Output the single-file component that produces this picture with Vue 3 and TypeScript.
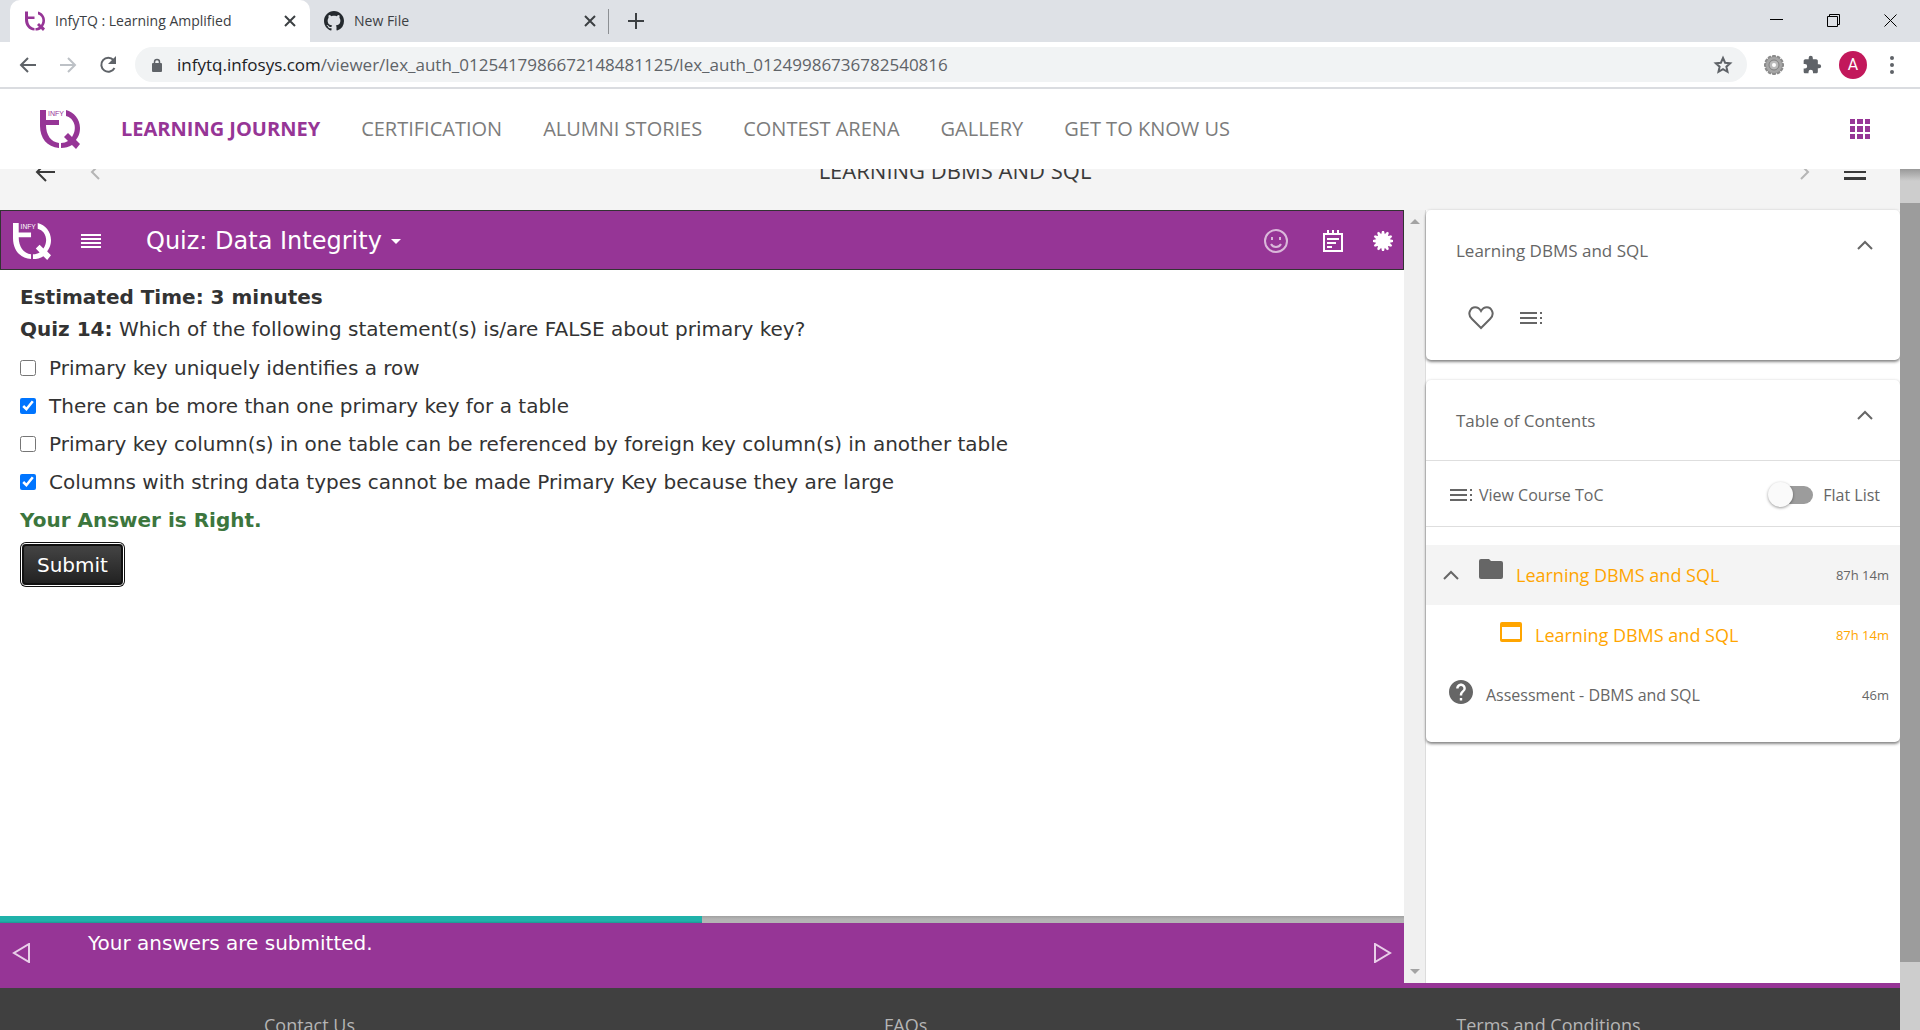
<script setup lang="ts">
import { ref } from 'vue'

interface Option {
  id: string
  text: string
  checked: boolean
}

const navItems: string[] = ['CERTIFICATION', 'ALUMNI STORIES', 'CONTEST ARENA', 'GALLERY', 'GET TO KNOW US']

const options = ref<Option[]>([
  { id: 'opt-1', text: 'Primary key uniquely identifies a row', checked: false },
  { id: 'opt-2', text: 'There can be more than one primary key for a table', checked: true },
  {
    id: 'opt-3',
    text: 'Primary key column(s) in one table can be referenced by foreign key column(s) in another table',
    checked: false,
  },
  { id: 'opt-4', text: 'Columns with string data types cannot be made Primary Key because they are large', checked: true },
])

const flatList = ref(false)
const progress = 50
const teeth = Array.from({ length: 12 }, (_, i) => i * 30)
</script>

<template>
  <div class="window">
    <svg class="defs" aria-hidden="true">
      <symbol id="infytq" viewBox="0 0 40 40">
        <path d="M0 1h6v10h13v5H6c0 10 5 17 13 18v5C7 38 0 29 0 17z" fill="currentColor" />
        <path d="M26 1c8 2 14 9 14 18 0 6-2 9-4 12l4 4-4 5-4-4c-3 2-7 3-11 3v-5c3 0 5-1 7-2l-4-4 4-4 4 4c6-9 2-19-6-21z" fill="currentColor" />
      </symbol>
      <symbol id="toc" viewBox="0 0 24 14">
        <path d="M0 2h17M0 7h17M0 12h17M20 2h2M20 7h2M20 12h2" stroke="currentColor" stroke-width="2" />
      </symbol>
      <symbol id="up" viewBox="0 0 16 10">
        <path d="M1 9l7-7 7 7" fill="none" stroke="currentColor" stroke-width="2" />
      </symbol>
    </svg>

    <header class="browser">
      <div class="tabs">
        <div class="tab active">
          <svg class="favicon purple"><use href="#infytq" /></svg>
          <span class="tab-title">InfyTQ : Learning Amplified</span>
          <button class="icon-btn" aria-label="Close tab">
            <svg width="12" height="12" viewBox="0 0 12 12"><path d="M1 1l10 10M11 1L1 11" stroke="#3c4043" stroke-width="2" /></svg>
          </button>
        </div>
        <div class="tab second">
          <svg class="favicon" viewBox="0 0 16 16"><path fill="#24292e" d="M8 0C3.58 0 0 3.58 0 8c0 3.54 2.29 6.53 5.47 7.59.4.07.55-.17.55-.38 0-.19-.01-.82-.01-1.49-2.01.37-2.53-.49-2.69-.94-.09-.23-.48-.94-.82-1.13-.28-.15-.68-.52-.01-.53.63-.01 1.08.58 1.23.82.72 1.21 1.87.87 2.33.66.07-.52.28-.87.51-1.07-1.78-.2-3.64-.89-3.64-3.95 0-.87.31-1.59.82-2.15-.08-.2-.36-1.02.08-2.12 0 0 .67-.21 2.2.82.64-.18 1.32-.27 2-.27s1.36.09 2 .27c1.53-1.04 2.2-.82 2.2-.82.44 1.1.16 1.92.08 2.12.51.56.82 1.27.82 2.15 0 3.07-1.87 3.75-3.65 3.95.29.25.54.73.54 1.48 0 1.07-.01 1.93-.01 2.2 0 .21.15.46.55.38A8.01 8.01 0 0016 8c0-4.42-3.58-8-8-8z" /></svg>
          <span class="tab-title">New File</span>
          <button class="icon-btn" aria-label="Close tab">
            <svg width="12" height="12" viewBox="0 0 12 12"><path d="M1 1l10 10M11 1L1 11" stroke="#3c4043" stroke-width="2" /></svg>
          </button>
        </div>
        <button class="icon-btn new-tab" aria-label="New tab">
          <svg width="16" height="16" viewBox="0 0 16 16"><path d="M8 0v16M0 8h16" stroke="#3c4043" stroke-width="2" /></svg>
        </button>
        <div class="controls">
          <button class="icon-btn" aria-label="Minimize"><svg width="14" height="14" viewBox="0 0 14 14"><path d="M0 5.500h13" stroke="#000" /></svg></button>
          <button class="icon-btn" aria-label="Restore"><svg width="14" height="14" viewBox="0 0 14 14" fill="none" stroke="#000"><path d="M.5 2.500h10v10H.5zM2.500 2.500v-2h10v10h-2" /></svg></button>
          <button class="icon-btn" aria-label="Close"><svg width="14" height="14" viewBox="0 0 14 14"><path d="M.5 .5l12 12M12.500 .5l-12 12" stroke="#000" /></svg></button>
        </div>
      </div>

      <div class="toolbar">
        <div class="nav-buttons">
          <button class="icon-btn" aria-label="Back"><svg width="20" height="20" viewBox="0 0 20 20" fill="none" stroke="#5f6368" stroke-width="2"><path d="M18 10H3M10 3l-7 7 7 7" /></svg></button>
          <button class="icon-btn" aria-label="Forward"><svg width="20" height="20" viewBox="0 0 20 20" fill="none" stroke="#bdc1c6" stroke-width="2"><path d="M2 10h15M10 3l7 7-7 7" /></svg></button>
          <button class="icon-btn" aria-label="Reload"><svg width="20" height="20" viewBox="0 0 20 20"><path d="M16.500 13A7 7 0 1 1 15.500 5" fill="none" stroke="#5f6368" stroke-width="2" /><path d="M18 1v8h-8z" fill="#5f6368" /></svg></button>
        </div>
        <div class="omnibox">
          <svg width="12" height="14" viewBox="0 0 12 14"><rect x="1" y="5" width="10" height="9" rx="1" fill="#5f6368" /><path d="M3.500 6V4a2.500 2.500 0 0 1 5 0v2" fill="none" stroke="#5f6368" stroke-width="1.500" /></svg>
          <span class="url"><b>infytq.infosys.com</b>/viewer/lex_auth_0125417986672148481125/lex_auth_01249986736782540816</span>
          <button class="icon-btn" aria-label="Bookmark"><svg width="20" height="20" viewBox="0 0 20 20"><path d="M10 3l2.100 4.700 5.100.5-3.800 3.500 1.100 5.100-4.500-2.700-4.500 2.700 1.100-5.100-3.800-3.500 5.100-.5z" fill="none" stroke="#5f6368" stroke-width="2" /></svg></button>
        </div>
        <div class="extensions">
          <svg width="20" height="20" viewBox="0 0 20 20">
            <rect v-for="a in teeth" :key="a" x="8" y="0" width="4" height="5" rx="1" fill="#8c8c8c" :transform="`rotate(${a} 10 10)`" />
            <circle cx="10" cy="10" r="8" fill="#a6a6a6" /><circle cx="10" cy="10" r="5" fill="#bbb" stroke="#808080" /><circle cx="10" cy="10" r="2" fill="#fff" />
          </svg>
          <svg width="20" height="20" viewBox="0 0 24 24"><path fill="#5f6368" d="M20.500 11H19V7c0-1.100-.9-2-2-2h-4V3.500a2.500 2.500 0 0 0-5 0V5H4c-1.100 0-2 .9-2 2v3.800h1.500a2.700 2.700 0 0 1 0 5.400H2V20c0 1.100.9 2 2 2h3.800v-1.500a2.700 2.700 0 0 1 5.400 0V22H17c1.100 0 2-.9 2-2v-4h1.500a2.500 2.500 0 0 0 0-5z" /></svg>
          <button class="avatar">A</button>
          <svg width="4" height="18" viewBox="0 0 4 18" fill="#5f6368"><circle cx="2" cy="2" r="2" /><circle cx="2" cy="9" r="2" /><circle cx="2" cy="16" r="2" /></svg>
        </div>
      </div>
    </header>

    <header class="site-header">
      <svg class="logo purple" viewBox="0 0 40 40"><use href="#infytq" /><text x="8" y="7">INFY</text></svg>
      <nav>
        <a href="#" class="current">LEARNING JOURNEY</a>
        <a v-for="item in navItems" :key="item" href="#">{{ item }}</a>
      </nav>
      <button class="icon-btn apps" aria-label="Apps">
        <svg width="20" height="20" viewBox="0 0 20 20"><path fill="#963596" d="M0 0h5v5H0zM7 0h6v5H7zM15 0h5v5h-5zM0 7h5v6H0zM7 7h6v6H7zM15 7h5v6h-5zM0 15h5v5H0zM7 15h6v5H7zM15 15h5v5h-5z" /></svg>
      </button>
    </header>

    <div class="viewport">
      <div class="page">
        <div class="course-bar">
          <div class="course-inner">
            <button class="icon-btn" aria-label="Go back"><svg width="20" height="20" viewBox="0 0 20 20" fill="none" stroke="#3a3a3a" stroke-width="2"><path d="M20 10H2M11 1l-9 9 9 9" /></svg></button>
            <button class="icon-btn prev" aria-label="Previous"><svg width="10" height="16" viewBox="0 0 10 16" fill="none" stroke="#b5b5b5" stroke-width="2"><path d="M9 1L2 8l7 7" /></svg></button>
            <h1>LEARNING DBMS AND SQL</h1>
            <button class="icon-btn next" aria-label="Next"><svg width="10" height="16" viewBox="0 0 10 16" fill="none" stroke="#b5b5b5" stroke-width="2"><path d="M1 1l7 7-7 7" /></svg></button>
            <button class="icon-btn" aria-label="Menu"><svg width="22" height="16" viewBox="0 0 22 16"><path d="M0 1h22M0 8h22" stroke="#3a3a3a" stroke-width="2" /><path d="M0 14.500h22" stroke="#3a3a3a" stroke-width="3" /></svg></button>
          </div>
        </div>

        <main class="content">
          <section class="player">
            <div class="player-bar">
              <svg class="player-logo" viewBox="0 0 40 40"><use href="#infytq" /><text x="8" y="7">INFY</text></svg>
              <button class="icon-btn player-menu" aria-label="Contents"><svg width="20" height="16" viewBox="0 0 20 16"><path d="M0 2h20M0 6h20M0 10h20M0 14h20" stroke="#fff" stroke-width="2" /></svg></button>
              <button class="player-title">Quiz: Data Integrity<span class="caret"></span></button>
              <div class="player-tools">
                <svg class="smile" width="24" height="24" viewBox="0 0 24 24" fill="none" stroke="#fff" stroke-width="2"><circle cx="12" cy="12" r="11" /><path d="M7 15c2 4 8 4 10 0" /><path d="M8 8v3M16 8v3" /></svg>
                <svg class="note" width="20" height="22" viewBox="0 0 20 22" fill="none" stroke="#fff" stroke-width="2"><path d="M1 4h18v17H1zM5 0v5M10 0v5M15 0v5" /><path d="M4 9h12M4 13h9M4 17h5" /></svg>
                <svg width="20" height="20" viewBox="0 0 20 20"><circle cx="10" cy="10" r="7" fill="#fff" /><path v-for="a in teeth" :key="a" d="M8 4l1-4h2l1 4z" fill="#fff" :transform="`rotate(${a} 10 10)`" /></svg>
              </div>
            </div>

            <form class="quiz" @submit.prevent>
              <p><strong>Estimated Time: 3 minutes</strong></p>
              <p><strong>Quiz 14:</strong> Which of the following statement(s) is/are FALSE about primary key?</p>
              <div class="options">
                <div v-for="o in options" :key="o.id" class="option">
                  <input :id="o.id" v-model="o.checked" type="checkbox" />
                  <label :for="o.id">{{ o.text }}</label>
                </div>
              </div>
              <p class="result"><strong>Your Answer is Right.</strong></p>
              <button class="submit">Submit</button>
            </form>

            <div class="progress"><div class="done" :style="{ width: progress + '%' }"></div></div>
            <div class="player-foot">
              <button class="icon-btn" aria-label="Previous page"><svg width="18" height="20" viewBox="0 0 18 20" fill="none" stroke="#e9cfe9" stroke-width="2"><path d="M17 1v18L2 10z" /></svg></button>
              <p>Your answers are submitted.</p>
              <button class="icon-btn" aria-label="Next page"><svg width="18" height="20" viewBox="0 0 18 20" fill="none" stroke="#e9cfe9" stroke-width="2"><path d="M1 1v18l15-9z" /></svg></button>
            </div>
          </section>

          <div class="side-area">
            <div class="inner-scroll"><span class="arrow up"></span><span class="arrow down"></span></div>
            <aside>
              <section class="card summary">
                <div class="card-head">
                  <h2>Learning DBMS and SQL</h2>
                  <svg class="collapse"><use href="#up" /></svg>
                </div>
                <div class="card-actions">
                  <button class="icon-btn" aria-label="Favourite"><svg width="26" height="24" viewBox="0 0 26 24" fill="none" stroke="#666" stroke-width="2"><path d="M13 22L4 13C1 10 1 7 2 5c2-5 8-5 11 0 3-5 9-5 11 0 1 2 1 5-2 8z" /></svg></button>
                  <button class="icon-btn" aria-label="Contents list"><svg class="toc-icon"><use href="#toc" /></svg></button>
                </div>
              </section>

              <section class="card">
                <div class="card-head toc-head">
                  <h2>Table of Contents</h2>
                  <svg class="collapse"><use href="#up" /></svg>
                </div>
                <div class="toc-tools">
                  <svg class="toc-icon"><use href="#toc" /></svg>
                  <a href="#">View Course ToC</a>
                  <input id="flat" v-model="flatList" class="switch" type="checkbox" />
                  <label for="flat">Flat List</label>
                </div>
                <div class="tree">
                  <div class="row folder">
                    <svg class="fold"><use href="#up" /></svg>
                    <svg class="glyph" width="24" height="20" viewBox="0 0 24 20"><path d="M2 0h8l2 2h10q2 0 2 2v14q0 2-2 2H2q-2 0-2-2V2q0-2 2-2z" fill="#666" /></svg>
                    <a href="#" class="orange">Learning DBMS and SQL</a><span class="time">87h 14m</span>
                  </div>
                  <div class="row child">
                    <svg class="glyph" width="22" height="20" viewBox="0 0 22 20"><path d="M2 0h18q2 0 2 2v16q0 2-2 2H2q-2 0-2-2V2q0-2 2-2zM2 5v12h18V5z" fill="orange" fill-rule="evenodd" /></svg>
                    <a href="#" class="orange">Learning DBMS and SQL</a><span class="time orange">87h 14m</span>
                  </div>
                  <div class="row exam">
                    <svg class="glyph" width="24" height="24" viewBox="2 2 20 20"><path fill="#666" d="M12 2C6.480 2 2 6.480 2 12s4.480 10 10 10 10-4.480 10-10S17.520 2 12 2zm1 17h-2v-2h2v2zm2.070-7.750l-.9.920C13.450 12.900 13 13.500 13 15h-2v-.5c0-1.100.45-2.100 1.170-2.830l1.240-1.260c.37-.36.59-.86.59-1.410 0-1.100-.9-2-2-2s-2 .9-2 2H8c0-2.210 1.790-4 4-4s4 1.790 4 4c0 .88-.36 1.680-.93 2.250z" /></svg>
                    <a href="#">Assessment - DBMS and SQL</a><span class="time">46m</span>
                  </div>
                </div>
              </section>
            </aside>
          </div>
        </main>

        <footer>
          <a href="#">Contact Us</a>
          <a href="#">FAQs</a>
          <a href="#">Terms and Conditions</a>
        </footer>
      </div>
      <div class="page-scroll"><div class="thumb"></div></div>
    </div>
  </div>
</template>

<style>
body {
  overflow: hidden;
}
</style>

<style scoped>
* {
  box-sizing: border-box;
}
.window {
  display: flex;
  flex-direction: column;
  height: 100vh;
  overflow: hidden;
  background: #fff;
  color: #666;
  font: 17px/24px 'Open Sans', 'Noto Sans', sans-serif;
}
.defs {
  position: absolute;
  width: 0;
  height: 0;
}
svg {
  display: block;
  flex: none;
}
svg text {
  fill: currentColor;
  font: 7px 'Liberation Sans', sans-serif;
}
a {
  color: inherit;
  text-decoration: none;
}
h1,
h2,
p {
  margin: 0;
  font-weight: 400;
}
.icon-btn {
  display: flex;
  flex: none;
  padding: 0;
  border: 0;
  background: none;
  color: inherit;
}
.purple {
  color: #963596;
}

.tabs {
  display: flex;
  align-items: center;
  height: 42px;
  padding: 0 22px 0 10px;
  background: #dee1e6;
}
.tab {
  display: flex;
  align-items: center;
  height: 42px;
  gap: 10px;
  color: #3c4043;
  font-size: 14px;
}
.tab.active {
  width: 300px;
  padding: 0 14px 0 15px;
  border-radius: 10px 10px 0 0;
  background: #fff;
}
.tab.second {
  width: 299px;
  height: 25px;
  padding: 0 12px 0 14px;
  border-right: 1px solid #8c8f93;
}
.tab-title {
  flex: 1;
  white-space: nowrap;
}
.favicon {
  width: 20px;
  height: 20px;
}
.new-tab {
  margin-left: 19px;
}
.controls {
  display: flex;
  gap: 43px;
  margin-left: auto;
}
.toolbar {
  display: flex;
  align-items: center;
  height: 47px;
  padding: 0 26px 0 18px;
  border-bottom: 2px solid #dadce0;
}
.nav-buttons {
  display: flex;
  gap: 20px;
  margin-right: 17px;
}
.omnibox {
  display: flex;
  flex: 1;
  align-items: center;
  height: 35px;
  padding: 0 14px 0 16px;
  border-radius: 18px;
  background: #f1f3f4;
}
.url {
  flex: 1;
  margin-left: 14px;
  color: #5f6368;
  font-size: 17px;
  white-space: nowrap;
}
.url b {
  color: #202124;
  font-weight: 400;
}
.extensions {
  display: flex;
  align-items: center;
  gap: 18px;
  margin-left: 17px;
}
.avatar {
  width: 28px;
  height: 28px;
  margin: 0 5px 0 -1px;
  padding: 0;
  border: 0;
  border-radius: 50%;
  background: #c2185b;
  color: #fff;
  font: 16px/28px Roboto, sans-serif;
}

.site-header {
  display: flex;
  flex: none;
  align-items: center;
  height: 80px;
  padding: 0 50px 0 40px;
  background: #fff;
}
.logo {
  width: 40px;
  height: 40px;
}
nav {
  display: flex;
  gap: 41px;
  margin-left: 41px;
  color: #7c7c7c;
  font-size: 20px;
  white-space: nowrap;
}
nav .current {
  color: #963596;
  font-weight: 700;
}
.apps {
  margin-left: auto;
}

.viewport {
  display: flex;
  flex: 1;
  min-height: 0;
}
.page {
  display: flex;
  flex: 1;
  flex-direction: column;
  min-width: 0;
}
.page-scroll {
  width: 20px;
  padding-top: 34px;
  background: linear-gradient(#999, #cdcdcd 12px);
}
.thumb {
  height: 92%;
  max-height: 759px;
  background: #9c9c9c;
}
.course-bar {
  flex: none;
  height: 41px;
  overflow: hidden;
  background: #f4f4f4;
}
.course-inner {
  display: flex;
  align-items: center;
  height: 76px;
  margin-top: -35px;
  padding: 0 34px 0 35px;
}
.prev {
  margin-left: 35px;
}
.next {
  margin-right: 34px;
}
h1 {
  flex: 1;
  padding: 0 0 4px 10px;
  color: #3a3a3a;
  font-size: 22px;
  text-align: center;
}

.content {
  display: flex;
  flex: 1;
  background: #963596;
}
.player {
  display: flex;
  flex: 1404;
  flex-direction: column;
  min-width: 0;
  background: #fff;
  font-family: 'DejaVu Sans', Verdana, sans-serif;
}
.player-bar {
  display: flex;
  align-items: center;
  height: 60px;
  padding: 2px 10px 0 12px;
  border: 1px solid #333;
  background: #963596;
  color: #fff;
}
.player-logo {
  width: 38px;
  height: 38px;
}
.player-menu {
  margin-left: 30px;
}
.player-title {
  display: flex;
  align-items: center;
  gap: 9px;
  margin-left: 45px;
  padding: 0;
  border: 0;
  background: none;
  color: #fff;
  font: 24px/32px 'DejaVu Sans', Verdana, sans-serif;
}
.caret {
  border: 5px solid transparent;
  border-top-color: #fff;
  border-bottom: 0;
}
.player-tools {
  display: flex;
  align-items: center;
  margin-left: auto;
}
.smile {
  opacity: 0.65;
}
.note {
  margin: 0 30px 0 35px;
}
.quiz {
  flex: 1;
  padding: 11px 20px;
  color: #333;
  font-size: 20px;
  line-height: 32px;
}
.options {
  padding-top: 4px;
}
.option {
  display: flex;
  align-items: center;
  gap: 13px;
  height: 38px;
}
.option input {
  width: 16px;
  height: 16px;
  margin: 0;
  accent-color: #0075ff;
}
.result {
  color: #3c763d;
  line-height: 38px;
}
.submit {
  display: block;
  height: 41px;
  margin: 5px 2px;
  padding: 0 13px;
  border: 2px solid #111;
  border-radius: 4px;
  background: linear-gradient(#444, #222);
  box-shadow: 0 0 0 1px #fff, 0 0 0 2px #111;
  color: #fff;
  font: 20px/32px 'DejaVu Sans', Verdana, sans-serif;
}
.progress {
  height: 7px;
  background: linear-gradient(#a0a0a0, #b4b4b4 3px);
}
.done {
  height: 7px;
  background: linear-gradient(#20b2aa 5px, #1c9690);
}
.player-foot {
  display: flex;
  align-items: center;
  height: 65px;
  padding: 0 12px 5px;
  background: #963596;
  color: #fff;
  font-size: 20px;
}
.player-foot p {
  flex: 1;
  align-self: flex-start;
  padding: 8px 58px;
}
.side-area {
  display: flex;
  flex: 496;
  min-width: 0;
  margin-bottom: 5px;
  background: #fff;
}
.inner-scroll {
  display: flex;
  flex-direction: column;
  align-items: center;
  justify-content: space-between;
  width: 22px;
  padding: 9px 0;
  border-right: 1px solid #dcdcdc;
  background: #f0f0f0;
}
.arrow {
  border: 5px solid transparent;
}
.arrow.up {
  border-top: 0;
  border-bottom-color: #a3a3a3;
}
.arrow.down {
  border-bottom: 0;
  border-top-color: #a3a3a3;
}
aside {
  flex: 1;
  min-width: 0;
}
.card {
  border-radius: 5px;
  box-shadow: 0 2px 3px rgba(0, 0, 0, 0.45), 0 0 3px rgba(0, 0, 0, 0.12);
}
.summary {
  height: 150px;
  margin-bottom: 20px;
}
.card-head {
  display: flex;
  justify-content: space-between;
  height: 81px;
  padding: 28px 27px 0 30px;
}
.card-head h2 {
  font-size: 17px;
  line-height: 26px;
}
.collapse {
  width: 16px;
  height: 10px;
  margin-top: 2px;
}
.card-actions {
  display: flex;
  align-items: center;
  gap: 26px;
  height: 54px;
  padding-left: 42px;
}
.toc-icon {
  width: 24px;
  height: 14px;
}
.toc-head {
  border-bottom: 1px solid #dedede;
}
.toc-tools {
  display: flex;
  align-items: center;
  height: 66px;
  padding: 2px 20px 0 24px;
  border-bottom: 1px solid #dedede;
  font-size: 16px;
}
.toc-tools a {
  flex: 1;
  margin-left: 5px;
}
.switch {
  position: relative;
  width: 35px;
  height: 18px;
  margin: 0 10px 0 0;
  border-radius: 9px;
  background: #9c9c9c;
  appearance: none;
}
.switch::before {
  position: absolute;
  top: -4px;
  left: -10px;
  width: 25px;
  height: 25px;
  border-radius: 50%;
  background: #fafafa;
  box-shadow: 0 1px 3px rgba(0, 0, 0, 0.4);
  content: '';
}
.tree {
  padding: 18px 0 17px;
}
.row {
  display: flex;
  align-items: center;
  height: 60px;
  padding-right: 11px;
  font-size: 16px;
}
.row a {
  flex: 1;
}
.folder {
  padding-left: 17px;
  background: #f4f4f4;
}
.child {
  padding-left: 74px;
}
.exam {
  padding-left: 23px;
}
.fold {
  width: 16px;
  height: 10px;
  margin-right: 20px;
}
.glyph {
  margin: 0 13px 7px 0;
}
.folder .glyph {
  margin-bottom: 13px;
}
.orange {
  color: orange;
}
.row a.orange {
  font-size: 18px;
}
.time {
  font-size: 13px;
}

footer {
  display: flex;
  flex: none;
  gap: 529px;
  height: 42px;
  padding: 25px 264px 0;
  overflow: hidden;
  background: #404040;
  color: #b5b5b5;
  font-size: 18px;
  white-space: nowrap;
}
</style>
